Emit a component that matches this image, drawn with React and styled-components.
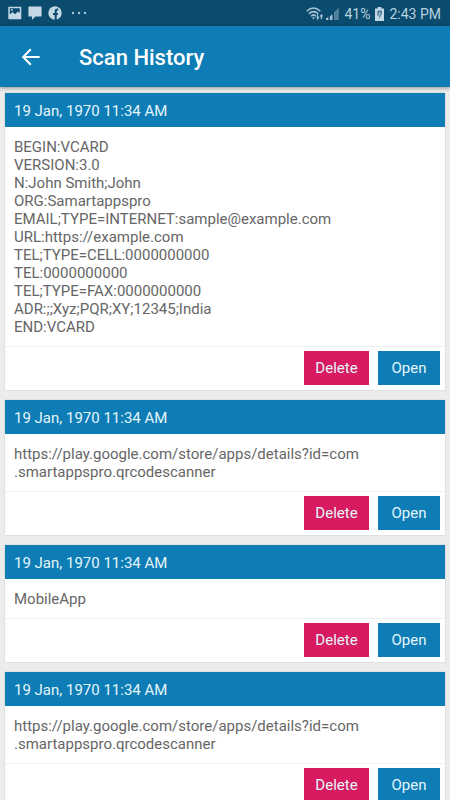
import styled, { createGlobalStyle } from 'styled-components';
import { useState } from 'react';

const vcard = `BEGIN:VCARD
VERSION:3.0
N:John Smith;John
ORG:Samartappspro
EMAIL;TYPE=INTERNET:sample@example.com
URL:https://example.com
TEL;TYPE=CELL:0000000000
TEL:0000000000
TEL;TYPE=FAX:0000000000
ADR:;;Xyz;PQR;XY;12345;India
END:VCARD`;

const storeLink = `https://play.google.com/store/apps/details?id=com
.smartappspro.qrcodescanner`;

const history = [
    { id: 1, date: '19 Jan, 1970 11:34 AM', content: vcard },
    { id: 2, date: '19 Jan, 1970 11:34 AM', content: storeLink },
    { id: 3, date: '19 Jan, 1970 11:34 AM', content: 'MobileApp' },
    { id: 4, date: '19 Jan, 1970 11:34 AM', content: storeLink },
];

export default function App(){

const [scans, setScans] = useState(history);

function deleteScan(id){
    setScans(scans.filter((scan) => scan.id !== id));
}

return(
<>
<GlobalStyle />
<Page>
    <StatusBar>
        <StatusGroup>
            <PictureIcon />
            <MessageIcon />
            <FacebookIcon />
            <MoreIcon />
        </StatusGroup>
        <StatusInfo>
            <WifiIcon />
            <SignalIcon />
            <span>41%</span>
            <BatteryIcon />
            <span>2:43 PM</span>
        </StatusInfo>
    </StatusBar>
    <AppBar>
        <BackButton type="button" aria-label="Back">
            <svg width="20" height="20" viewBox="0 0 20 20" fill="none" stroke="#FFFFFF" strokeWidth="2">
                <path d="M18.6 9H3M9.8 1.2L2.2 9L9.8 16.8" />
            </svg>
        </BackButton>
        <h1>Scan History</h1>
    </AppBar>
    <List>
        {scans.map((scan) =>(
            <Card key={scan.id}>
                <CardHeader>{scan.date}</CardHeader>
                <Content>{scan.content}</Content>
                <Actions>
                    <Button type="button" $color="#D81B60" $width="65px" onClick={() => deleteScan(scan.id)}>Delete</Button>
                    <Button type="button" $color="#0E7CB5" $width="62px">Open</Button>
                </Actions>
            </Card>
        ))}
    </List>
</Page>
</>
)
}

function PictureIcon(){
return(
<svg width="14" height="14" viewBox="0 0 14 14">
    <path fill="#C3D8E4" fillRule="evenodd" d="M1 0.8h11.6a.7.7 0 0 1 .7.7v11a.7.7 0 0 1-.7.7H1a.7.7 0 0 1-.7-.7v-11A.7.7 0 0 1 1 .8zM1.8 2.3v6.2l2.7-2.6 2.6 2.4 2.8-2.8 1.9 1.6V2.3z" />
    <circle cx="4" cy="4" r="0.9" fill="#C3D8E4" />
</svg>
)
}

function MessageIcon(){
return(
<svg width="14" height="14" viewBox="0 0 14 14">
    <path fill="#C3D8E4" d="M1 0.5h12a.6.6 0 0 1 .6.6v8.8a.6.6 0 0 1-.6.6H7.5L4 13.8V10.5H1a.6.6 0 0 1-.6-.6V1.1A.6.6 0 0 1 1 .5z" />
</svg>
)
}

function FacebookIcon(){
return(
<svg width="14" height="14" viewBox="0 0 14 14">
    <circle cx="7" cy="7" r="6.7" fill="#C3D8E4" />
    <path fill="none" stroke="#0A4B6E" strokeWidth="2" d="M10.2 3.6H9.3Q7.7 3.6 7.7 5.2V14M5 7.9h4.9" />
</svg>
)
}

function MoreIcon(){
return(
<svg width="16" height="14" viewBox="0 0 16 14" fill="#A9C6D6">
    <circle cx="1" cy="7" r="1.2" />
    <circle cx="7" cy="7" r="1.2" />
    <circle cx="13" cy="7" r="1.2" />
</svg>
)
}

function WifiIcon(){
return(
<svg width="18" height="14" viewBox="0 0 18 14" fill="none" stroke="#A9C6D6">
    <path strokeWidth="1.5" d="M0.7 4.2Q7.5-2.2 14.3 4.2M2.8 6.8Q7.5 2.4 12.2 6.8M5 9.2Q7.5 7 10 9.2" />
    <path fill="#A9C6D6" stroke="none" d="M6 10.6h3l-1.5 2zM10.2 9.8h1V7h1v2.8h1L11.7 13.4zM13.6 9.6L15.4 6.8 17.2 9.6h-1.2v2.6h-1.2V9.6z" />
</svg>
)
}

function SignalIcon(){
return(
<svg width="13" height="14" viewBox="0 0 13 14">
    <path fill="#A9C6D6" d="M0 11.2L2.4 10V13H0zM4 9.3L6.4 7.2V13H4z" />
    <path fill="#52819B" d="M8 5.2L12.8 0.8V13H8z" />
</svg>
)
}

function BatteryIcon(){
return(
<svg width="9" height="14" viewBox="0 0 9 14">
    <path fill="#C3D8E4" d="M2.7 0h3.6v1.5H9V14H0V1.5h2.7z" />
    <path fill="#4F7E98" d="M2.4 3.6h4.6v3.2L4 11.8V8.6H2.2z" />
    <path fill="#C3D8E4" d="M5.4 4.4L3.4 7.4h1.4l-.4 1.8 1.6-2.8H4.8z" />
</svg>
)
}

const GlobalStyle = createGlobalStyle`
*{
box-sizing: border-box;
}
body{
margin: 0;
background: #ECECEC;
font-family: Roboto, "Liberation Sans", sans-serif;
}
`;

const Page = styled.div`
display: flex;
flex-direction: column;
height: 100vh;
overflow: hidden;
`;

const StatusBar = styled.div`
display: flex;
flex-shrink: 0;
align-items: center;
justify-content: space-between;
height: 26px;
padding: 0px 9px 0px 8px;
background: #0A4B6E;
`;

const StatusGroup = styled.div`
display: flex;
align-items: center;
gap: 6px;

svg:last-child{
margin-left: 4px;
}
`;

const StatusInfo = styled.div`
display: flex;
align-items: center;
gap: 5px;
padding-top: 2px;
color: #B9D2DF;
font-size: 14px;
line-height: 20px;

svg:first-child{
margin-right: -3px;
}
`;

const AppBar = styled.header`
position: relative;
display: flex;
flex-shrink: 0;
align-items: center;
gap: 38px;
height: 61px;
padding: 2px 21px 0px;
background: #0E7CB5;
box-shadow: 0px 1px 4px rgba(0,0,0,0.4);

h1{
margin: 0;
color: #FFFFFF;
font-weight: 500;
font-size: 22px;
line-height: 28px;
}
`;

const BackButton = styled.button`
display: flex;
padding: 0;
border: none;
background: none;
cursor: pointer;
`;

const List = styled.main`
display: flex;
flex: 1;
flex-direction: column;
gap: 10px;
min-height: 0;
padding: 6px 5px;
overflow-y: auto;
scrollbar-width: none;
`;

const Card = styled.article`
flex-shrink: 0;
background: #FFFFFF;
box-shadow: 0px 0px 1px rgba(0,0,0,0.3);
`;

const CardHeader = styled.div`
height: 34px;
padding: 0px 9px;
background: #0E7CB5;
color: #E4F6FB;
font-size: 15px;
line-height: 36px;
`;

const Content = styled.div`
padding: 11px 9px 10px;
color: #666666;
font-size: 15px;
line-height: 18px;
white-space: pre-wrap;
overflow-wrap: anywhere;
`;

const Actions = styled.div`
display: flex;
justify-content: flex-end;
gap: 9px;
padding: 4px 5px 5px;
border-top: 1px solid #F0F0F0;
`;

const Button = styled.button`
width: ${(props) => props.$width};
height: 34px;
padding: 0;
border: none;
background: ${(props) => props.$color};
color: #E4F6FB;
font-family: inherit;
font-size: 15px;
line-height: 20px;
cursor: pointer;
`;
